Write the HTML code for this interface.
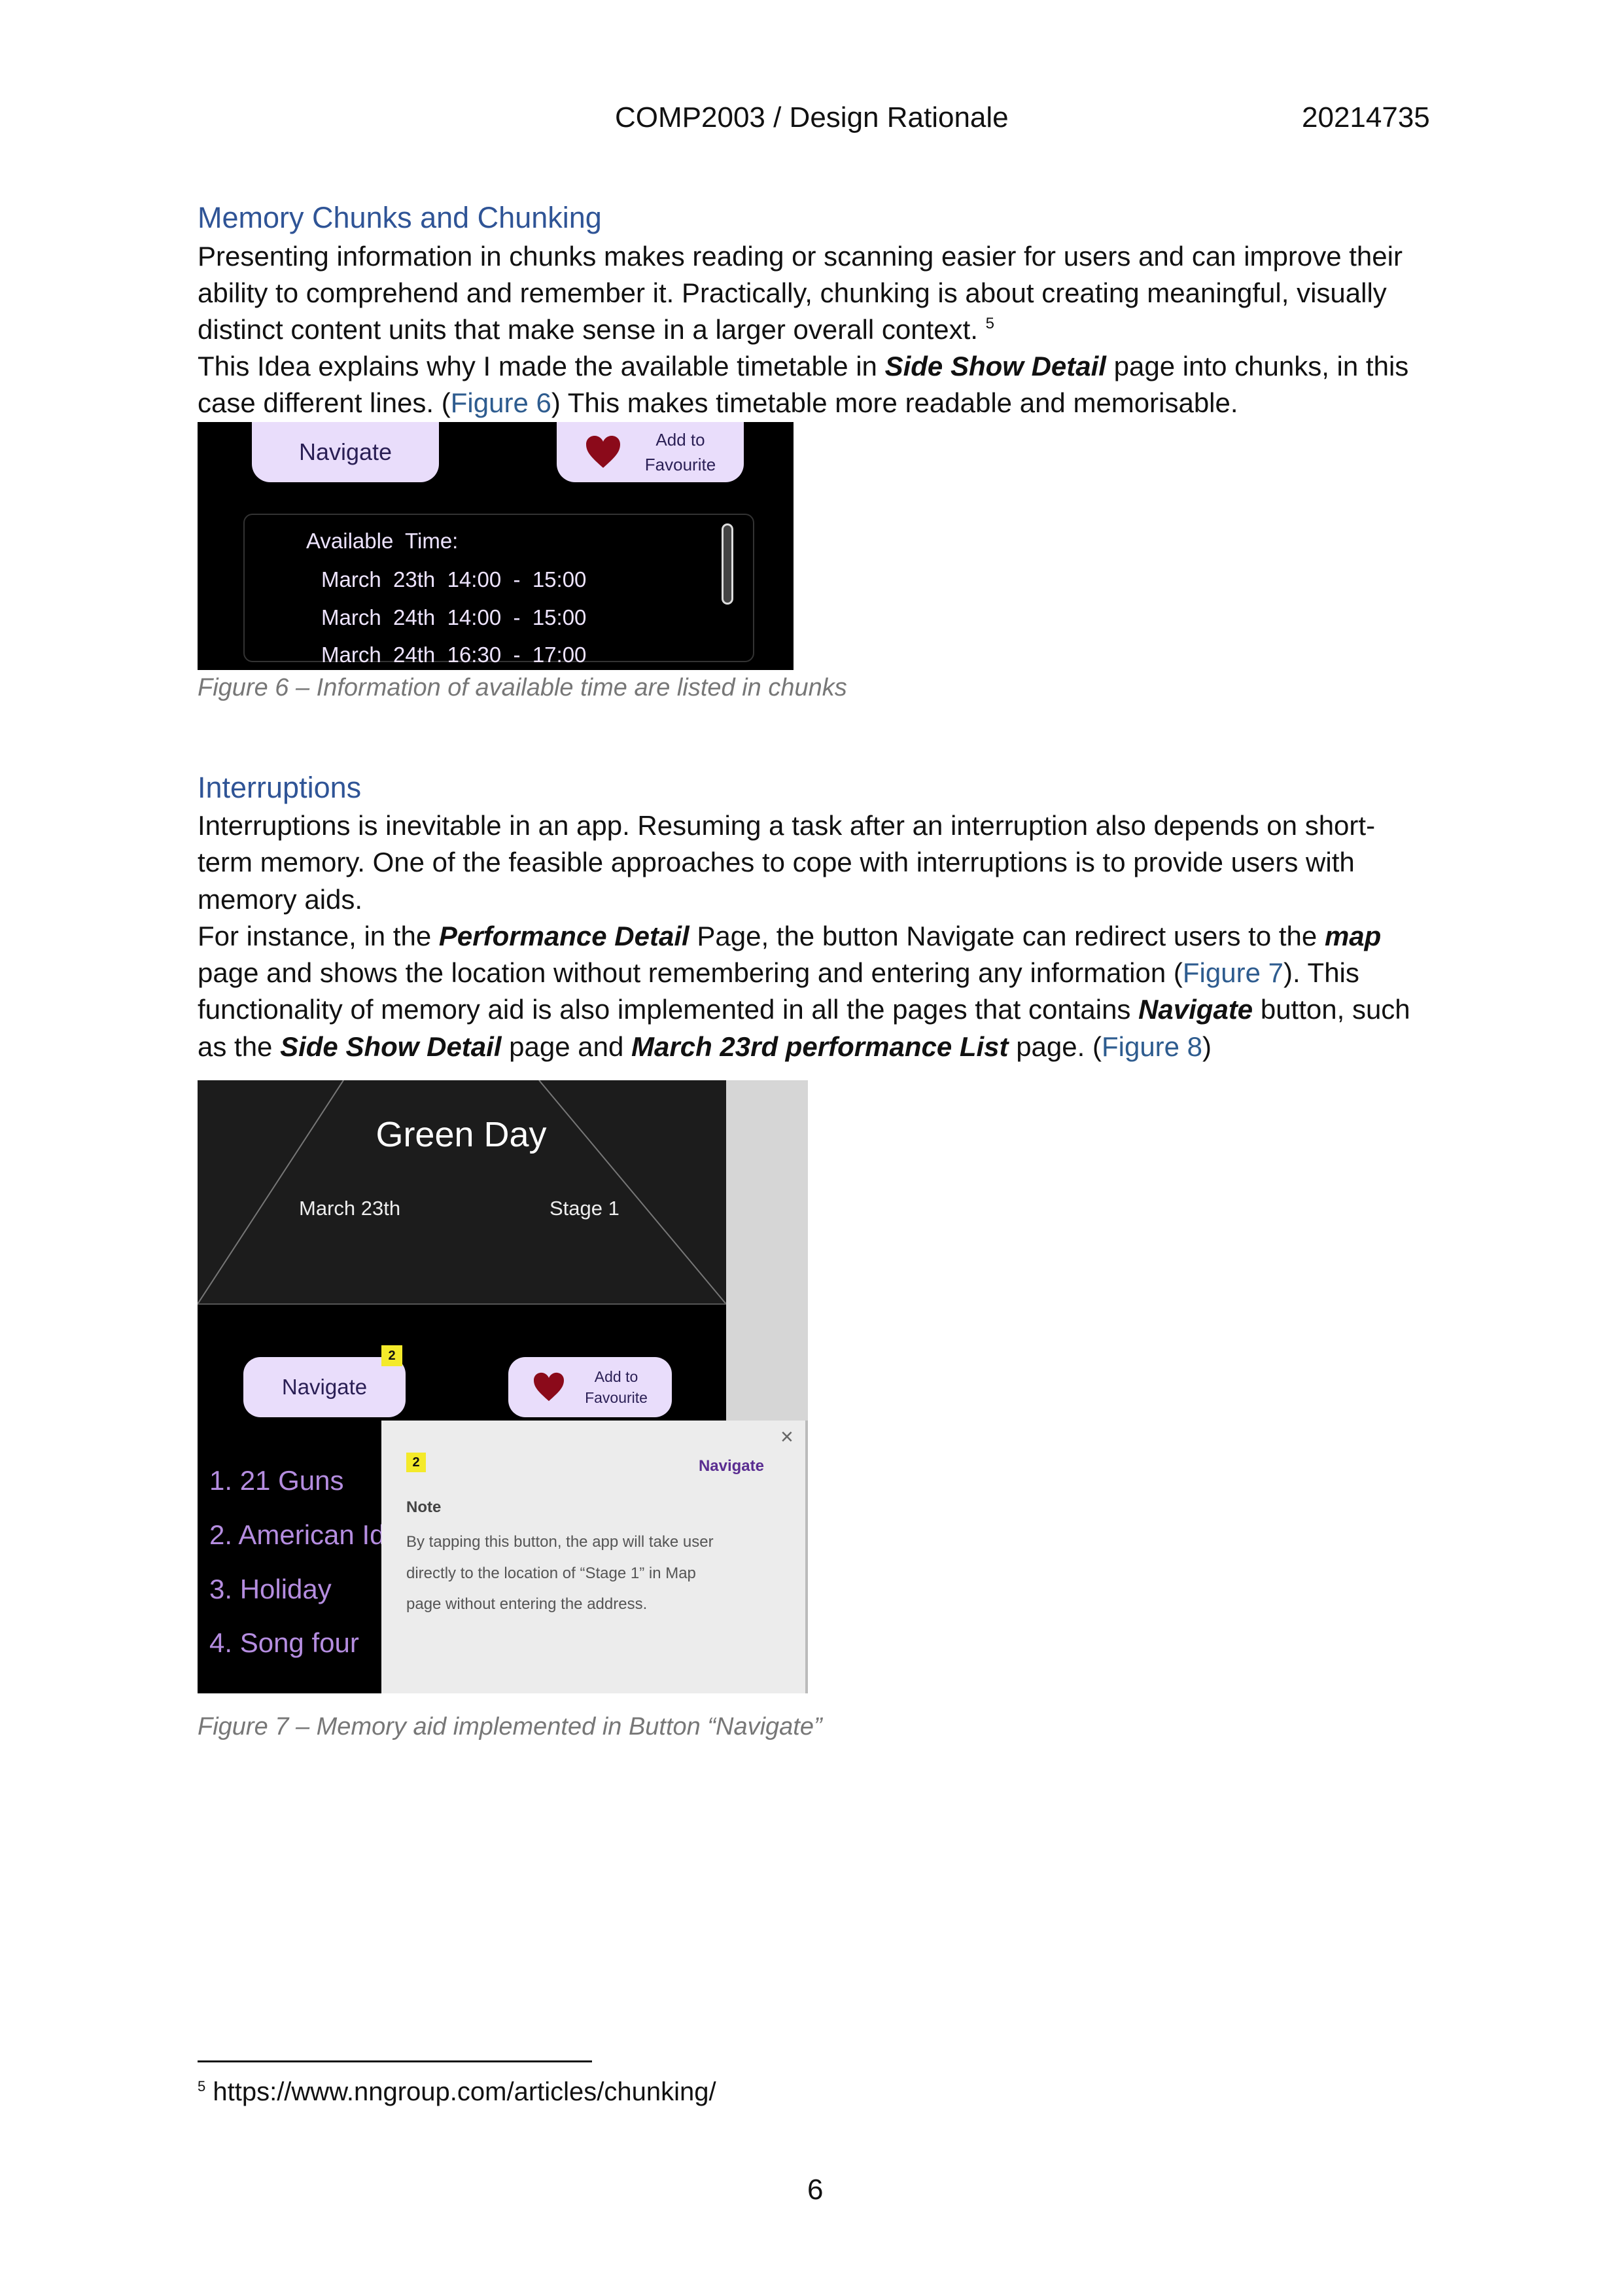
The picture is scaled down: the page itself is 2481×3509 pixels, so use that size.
<!DOCTYPE html>
<html><head><meta charset="utf-8"><style>
*{margin:0;padding:0;box-sizing:border-box}
body{width:2481px;height:3509px;background:#fff;position:relative;font-family:"Liberation Sans",sans-serif;color:#111;overflow:hidden}
.l{position:absolute;left:302px;white-space:nowrap;font-size:42px;line-height:56px}
.h{color:#2f5496;font-size:45px}
.a{color:#2e5c8f}
sup{line-height:0;vertical-align:0;position:relative;top:-16px}
.cap{position:absolute;left:302px;font-style:italic;color:#777;font-size:38px;line-height:50px;white-space:nowrap}
.abs{position:absolute}
.btn{position:absolute;background:#e9ddfb;color:#2a1f55;display:flex;align-items:center;justify-content:center}
.badge{position:absolute;background:#f4ea2a;color:#111;font-weight:bold;font-size:20px;display:flex;align-items:center;justify-content:center}
</style></head><body>
<div class="abs" style="left:940px;top:152px;font-size:44px;line-height:56px">COMP2003 / Design Rationale</div>
<div class="abs" style="left:1990px;top:152px;font-size:44px;line-height:56px">20214735</div>

<div class="l h" style="top:305px">Memory Chunks and Chunking</div>
<div class="l" style="top:364px">Presenting information in chunks makes reading or scanning easier for users and can improve their</div>
<div class="l" style="top:420px">ability to comprehend and remember it. Practically, chunking is about creating meaningful, visually</div>
<div class="l" style="top:476px">distinct content units that make sense in a larger overall context. <sup style="font-size:24px">5</sup></div>
<div class="l" style="top:532px">This Idea explains why I made the available timetable in <b><i>Side Show Detail</i></b> page into chunks, in this</div>
<div class="l" style="top:588px">case different lines. (<span class="a">Figure 6</span>) This makes timetable more readable and memorisable.</div>

<div class="abs" style="left:302px;top:645px;width:911px;height:379px;background:#000;overflow:hidden">
 <div class="btn" style="left:83px;top:-40px;width:286px;height:132px;border-radius:28px;font-size:36px;padding-top:40px">Navigate</div>
 <div class="btn" style="left:549px;top:-40px;width:286px;height:132px;border-radius:28px;padding-top:40px;font-size:26px;line-height:38px">
  <svg width="56" height="52" viewBox="0 0 56 52" style="margin-right:36px"><path d="M28 50 C10 34 2 26 2 14 C2 6 8 1 15 1 C21 1 26 5 28 10 C30 5 35 1 41 1 C48 1 54 6 54 14 C54 26 46 34 28 50Z" fill="#8b0a1a"/></svg><span style="text-align:center">Add to<br>Favourite</span></div>
 <div class="abs" style="left:70px;top:140px;width:781px;height:227px;border:2px solid #333;border-radius:14px"></div>
 <div class="abs" style="left:801px;top:155px;width:18px;height:124px;border:3px solid #ddd;border-radius:9px;background:#444"></div>
 <div class="abs" style="left:166px;top:162px;color:#eee4ff;font-size:33px;line-height:40px">Available&nbsp; Time:</div>
 <div class="abs" style="left:189px;top:221px;color:#eee4ff;font-size:33px;line-height:40px">March&nbsp; 23th&nbsp; 14:00&nbsp; -&nbsp; 15:00</div>
 <div class="abs" style="left:189px;top:279px;color:#eee4ff;font-size:33px;line-height:40px">March&nbsp; 24th&nbsp; 14:00&nbsp; -&nbsp; 15:00</div>
 <div class="abs" style="left:189px;top:336px;color:#eee4ff;font-size:33px;line-height:40px">March&nbsp; 24th&nbsp; 16:30&nbsp; -&nbsp; 17:00</div>
</div>
<div class="cap" style="top:1026px">Figure 6 – Information of available time are listed in chunks</div>

<div class="l h" style="top:1176px">Interruptions</div>
<div class="l" style="top:1234px">Interruptions is inevitable in an app. Resuming a task after an interruption also depends on short-</div>
<div class="l" style="top:1290px">term memory. One of the feasible approaches to cope with interruptions is to provide users with</div>
<div class="l" style="top:1347px">memory aids.</div>
<div class="l" style="top:1403px">For instance, in the <b><i>Performance Detail</i></b> Page, the button Navigate can redirect users to the <b><i>map</i></b></div>
<div class="l" style="top:1459px">page and shows the location without remembering and entering any information (<span class="a">Figure 7</span>). This</div>
<div class="l" style="top:1515px">functionality of memory aid is also implemented in all the pages that contains <b><i>Navigate</i></b> button, such</div>
<div class="l" style="top:1572px">as the <b><i>Side Show Detail</i></b> page and <b><i>March 23rd performance List</i></b> page. (<span class="a">Figure 8</span>)</div>

<div class="abs" style="left:302px;top:1651px;width:933px;height:937px;background:#000;overflow:hidden">
 <div class="abs" style="left:808px;top:0;width:125px;height:520px;background:#d6d6d6"></div>
 <svg class="abs" style="left:0;top:0" width="808" height="344">
  <rect width="808" height="342" fill="#1c1c1c"/>
  <line x1="0" y1="342" x2="223" y2="0" stroke="#777" stroke-width="2"/>
  <line x1="522" y1="0" x2="808" y2="342" stroke="#777" stroke-width="2"/>
  <line x1="0" y1="342" x2="808" y2="342" stroke="#555" stroke-width="2"/>
 </svg>
 <div class="abs" style="left:203px;top:50px;width:400px;text-align:center;color:#fff;font-size:54px;line-height:66px">Green Day</div>
 <div class="abs" style="left:155px;top:176px;color:#eee;font-size:31px;line-height:40px">March 23th</div>
 <div class="abs" style="left:538px;top:176px;color:#eee;font-size:31px;line-height:40px">Stage 1</div>
 <div class="btn" style="left:70px;top:423px;width:248px;height:92px;border-radius:26px;font-size:33px">Navigate</div>
 <div class="badge" style="left:281px;top:405px;width:32px;height:32px">2</div>
 <div class="btn" style="left:475px;top:423px;width:250px;height:92px;border-radius:26px;font-size:23px;line-height:32px">
  <svg width="50" height="46" viewBox="0 0 56 52" style="margin-right:30px"><path d="M28 50 C10 34 2 26 2 14 C2 6 8 1 15 1 C21 1 26 5 28 10 C30 5 35 1 41 1 C48 1 54 6 54 14 C54 26 46 34 28 50Z" fill="#8b0a1a"/></svg><span style="text-align:center">Add to<br>Favourite</span></div>
 <div class="abs" style="left:18px;top:587px;color:#b58de0;font-size:42px;line-height:50px">1. 21 Guns</div>
 <div class="abs" style="left:18px;top:670px;color:#b58de0;font-size:42px;line-height:50px">2. American Idiot</div>
 <div class="abs" style="left:18px;top:753px;color:#b58de0;font-size:42px;line-height:50px">3. Holiday</div>
 <div class="abs" style="left:18px;top:835px;color:#b58de0;font-size:42px;line-height:50px">4. Song four</div>
 <div class="abs" style="left:281px;top:520px;width:652px;height:417px;background:#ececec;border-right:4px solid #bbb">
  <div class="abs" style="left:610px;top:6px;font-size:34px;color:#666">&#215;</div>
  <div class="badge" style="left:38px;top:49px;width:30px;height:30px">2</div>
  <div class="abs" style="left:460px;top:55px;width:125px;text-align:right;color:#5a2d91;font-weight:bold;font-size:24px;line-height:30px">Navigate</div>
  <div class="abs" style="left:38px;top:118px;color:#444;font-weight:bold;font-size:24px;line-height:30px">Note</div>
  <div class="abs" style="left:38px;top:162px;color:#555;font-size:24px;line-height:47.5px;white-space:nowrap">By tapping this button, the app will take user<br>directly to the location of “Stage 1” in Map<br>page without entering the address.</div>
 </div>
</div>
<div class="cap" style="top:2614px">Figure 7 – Memory aid implemented in Button “Navigate”</div>

<div class="abs" style="left:302px;top:3149px;width:603px;height:3px;background:#111"></div>
<div class="abs" style="left:302px;top:3174px;font-size:40px;line-height:46px"><sup style="font-size:22px;top:-14px">5</sup> https://www.nngroup.com/articles/chunking/</div>
<div class="abs" style="left:1234px;top:3322px;font-size:44px;line-height:50px">6</div>
</body></html>
